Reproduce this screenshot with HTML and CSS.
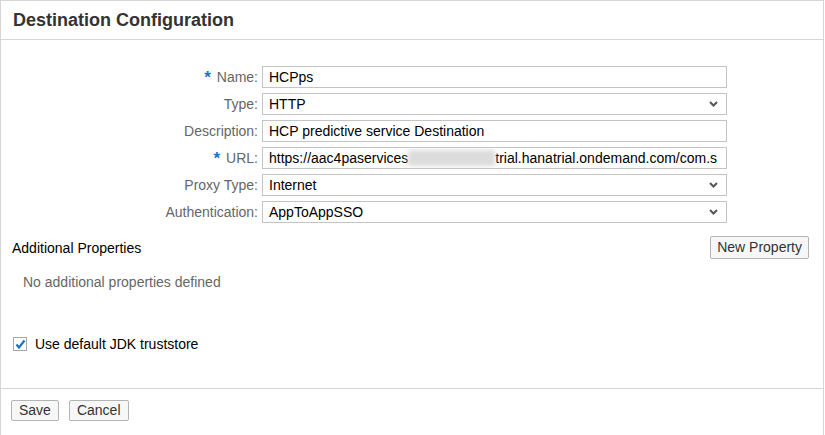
FILE: index.html
```html
<!DOCTYPE html>
<html>
<head>
<meta charset="utf-8">
<link rel="stylesheet" href="styles.css">
</head>
<body>
<div class="panel">
  <div class="header">Destination Configuration</div>
  <div class="body">
    <div class="form">
      <div class="label"><span class="req">*</span> Name:</div>
      <div class="field">HCPps</div>
      <div class="label">Type:</div>
      <div class="field select"><span>HTTP</span><svg class="chev" width="9" height="6" viewBox="0 0 9 6"><path d="M1 1l3.5 3.5L8 1" fill="none" stroke="#555" stroke-width="2"/></svg></div>
      <div class="label">Description:</div>
      <div class="field">HCP predictive service Destination</div>
      <div class="label"><span class="req">*</span> URL:</div>
      <div class="field url">https://aac4paservices<span class="blur"></span>trial.hanatrial.ondemand.com/com.s</div>
      <div class="label">Proxy Type:</div>
      <div class="field select"><span>Internet</span><svg class="chev" width="9" height="6" viewBox="0 0 9 6"><path d="M1 1l3.5 3.5L8 1" fill="none" stroke="#555" stroke-width="2"/></svg></div>
      <div class="label">Authentication:</div>
      <div class="field select"><span>AppToAppSSO</span><svg class="chev" width="9" height="6" viewBox="0 0 9 6"><path d="M1 1l3.5 3.5L8 1" fill="none" stroke="#555" stroke-width="2"/></svg></div>
    </div>
    <div class="props-head">
      <span class="props-title">Additional Properties</span>
      <button class="btn">New Property</button>
    </div>
    <div class="empty">No additional properties defined</div>
    <label class="check">
      <span class="box"><svg width="11" height="11" viewBox="0 0 11 11"><path d="M1.5 5.5l2.5 3L9.5 1.5" fill="none" stroke="#1a73c8" stroke-width="2.2"/></svg></span>
      Use default JDK truststore
    </label>
  </div>
  <div class="footer">
    <button class="btn">Save</button>
    <button class="btn">Cancel</button>
  </div>
</div>
</body>
</html>
```

FILE: styles.css
```css
html, body {
  margin: 0;
  padding: 0;
  background: #fff;
}
body {
  font-family: "Liberation Sans", Arial, sans-serif;
  font-size: 14px;
  color: #000;
}
.panel {
  width: 822px;
  height: 434px;
  border: 1px solid #d4d4d4;
  border-bottom: none;
  display: flex;
  flex-direction: column;
}
.header {
  border-bottom: 1px solid #d4d4d4;
  padding-left: 12px;
  padding-top: 1px;
  box-sizing: border-box;
  height: 39px;
  flex: none;
  font-size: 18px;
  font-weight: bold;
  color: #333;
  display: flex;
  align-items: center;
}
.body {
  flex: 1;
  padding-top: 26px;
}
.form {
  display: grid;
  grid-template-columns: 257px 465px;
  grid-auto-rows: 22px;
  column-gap: 4px;
  row-gap: 5px;
}
.label {
  text-align: right;
  color: #666;
  line-height: 22px;
  height: 22px;
  white-space: nowrap;
}
.req {
  color: #1a73c8;
  font-weight: bold;
  font-size: 17px;
  line-height: 10px;
  margin-right: 2px;
  display: inline-block;
  vertical-align: -1px;
}
.field {
  box-sizing: border-box;
  height: 22px;
  border: 1px solid #c4c4c4;
  padding: 0 6px;
  line-height: 20px;
  white-space: nowrap;
  overflow: hidden;
  color: #000;
  background: #fff;
}
.field.select {
  display: flex;
  justify-content: space-between;
  align-items: center;
  padding-right: 8px;
}
.chev {
  display: block;
}
.blur {
  display: inline-block;
  width: 87px;
  height: 16px;
  vertical-align: -3px;
  background: #dcdcdc;
  filter: blur(2px);
}
.props-head {
  display: flex;
  justify-content: space-between;
  align-items: center;
  margin-top: 13px;
  padding-left: 11px;
  padding-right: 14px;
}
.props-title {
  color: #000;
}
.btn {
  font-family: "Liberation Sans", Arial, sans-serif;
  font-size: 14px;
  color: #333;
  background: #f7f7f7;
  border: 1px solid #b4b4b4;
  border-radius: 2px;
  height: 23px;
  padding: 0 6px;
  margin: 0;
  line-height: 21px;
}
.empty {
  color: #666;
  padding-left: 22px;
  margin-top: 14px;
  line-height: 18px;
}
.check {
  display: flex;
  align-items: center;
  gap: 8px;
  margin-top: 45px;
  padding-left: 12px;
  color: #000;
}
.box {
  box-sizing: border-box;
  width: 14px;
  height: 14px;
  border: 1px solid #a8a8a8;
  display: flex;
  align-items: center;
  justify-content: center;
  background: #fff;
}
.box svg {
  display: block;
}
.footer {
  height: 47px;
  flex: none;
  border-top: 1px solid #d4d4d4;
  display: flex;
  align-items: flex-start;
  gap: 10px;
  padding-left: 10px;
  padding-top: 11px;
  box-sizing: border-box;
}
.footer .btn {
  height: 21px;
  line-height: 19px;
  padding: 0 7px;
}
```
